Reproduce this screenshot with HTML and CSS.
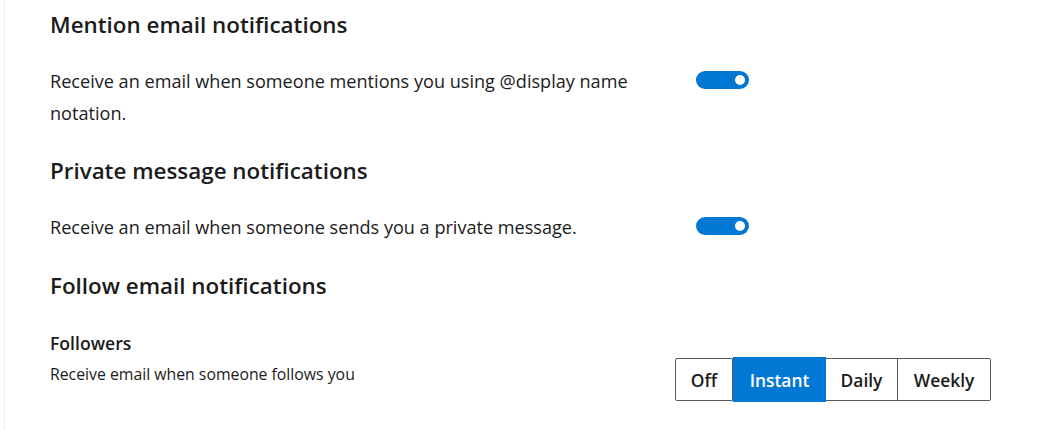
FILE: index.html
```html
<!DOCTYPE html>
<html lang="en">
<head>
<meta charset="utf-8">
<link rel="stylesheet" href="styles.css">
</head>
<body>
<div class="panel">
  <section class="group">
    <h2 class="group-title">Mention email notifications</h2>
    <div class="setting">
      <p class="setting-text">Receive an email when someone mentions you using @display name notation.</p>
      <span class="toggle"><span class="knob"></span></span>
    </div>
  </section>
  <section class="group">
    <h2 class="group-title">Private message notifications</h2>
    <div class="setting setting-last">
      <p class="setting-text">Receive an email when someone sends you a private message.</p>
      <span class="toggle"><span class="knob"></span></span>
    </div>
  </section>
  <section class="group">
    <h2 class="group-title">Follow email notifications</h2>
    <div class="follow-row">
      <div class="follow-info">
        <div class="follow-label">Followers</div>
        <div class="follow-desc">Receive email when someone follows you</div>
      </div>
      <div class="segmented">
        <button class="seg seg-off">Off</button>
        <button class="seg seg-active">Instant</button>
        <button class="seg seg-daily">Daily</button>
        <button class="seg seg-last">Weekly</button>
      </div>
    </div>
  </section>
</div>
</body>
</html>
```
FILE: styles.css
```css
* { box-sizing: border-box; }
html, body { margin: 0; padding: 0; background: #fff; }
body {
  font-family: "Open Sans", "Noto Sans", sans-serif;
  color: #1b1b1b;
  height: 430px;
  overflow: hidden;
}
.panel {
  margin-left: 4px;
  border-left: 1px solid #ececec;
  padding: 11px 72px 0 45px;
  height: 430px;
}
.group-title {
  margin: 0;
  font-size: 22.4px;
  line-height: 28px;
  font-weight: 600;
  color: #1b1b1b;
}
.setting {
  display: grid;
  grid-template-columns: 646px 53px;
  align-items: start;
  margin-top: 26px;
  margin-bottom: 28px;
}
.setting-last { margin-bottom: 29px; }
.setting-text {
  margin: 0;
  font-size: 18.1px;
  line-height: 32px;
  max-width: 625px;
}
.toggle {
  margin-top: 6px;
  width: 53px;
  height: 18px;
  border-radius: 9px;
  background: #0078d4;
  display: flex;
  align-items: center;
  justify-content: flex-end;
  padding-right: 4px;
}
.knob {
  width: 10px;
  height: 10px;
  border-radius: 50%;
  background: #fff;
}
.follow-row {
  display: flex;
  justify-content: space-between;
  align-items: flex-start;
  margin-top: 32px;
}
.follow-label {
  font-size: 17.6px;
  line-height: 22px;
  font-weight: 600;
}
.follow-desc {
  margin-top: 10px;
  font-size: 15.8px;
  line-height: 20px;
}
.segmented {
  display: flex;
  align-items: center;
  margin-top: 25px;
  height: 45px;
}
.seg {
  font-family: inherit;
  font-size: 17.4px;
  font-weight: 600;
  color: #1b1b1b;
  background: #fff;
  border: 1px solid #595959;
  border-left: none;
  height: 43px;
  padding: 0;
  margin: 0;
}
.seg-off { width: 58px; border-left: 1px solid #595959; border-radius: 2px 0 0 2px; }
.seg-active { width: 93px; height: 45px; background: #0078d4; color: #fff; border: none; }
.seg-daily { width: 72px; }
.seg-last { width: 93px; border-radius: 0 2px 2px 0; }
```
